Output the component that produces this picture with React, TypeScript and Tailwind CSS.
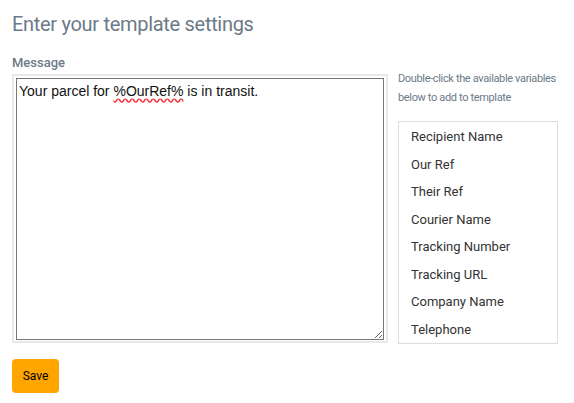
import { useState } from 'react';

const VARIABLES = [
  'Recipient Name',
  'Our Ref',
  'Their Ref',
  'Courier Name',
  'Tracking Number',
  'Tracking URL',
  'Company Name',
  'Telephone',
];

export default function App() {
  const [selected, setSelected] = useState<string | null>(null);

  return (
    <div className="min-h-[403px] bg-white px-3 pt-[10px] font-['Roboto',sans-serif]">
      {/* タイトル */}
      <h1 className="text-[20px] leading-[28px] text-[#6b7a88] tracking-[-0.3px]">
        Enter your template settings
      </h1>

      <div className="mt-[17px] flex gap-[10px]">
        {/* メッセージ */}
        <div className="w-[376px] shrink-0">
          <label className="block text-[13px] leading-[16px] font-medium text-[#6b7a88]">
            Message
          </label>
          <div className="mt-[3px] border-2 border-[#e8e8e8] p-[2px] h-[269px]">
            <div className="h-[262px] w-full resize overflow-auto border border-[#767676] px-[2px] pt-[2px] font-['Liberation_Sans',sans-serif] text-[14px] leading-[20px] text-[#111]">
              Your parcel for{' '}
              <span className="underline decoration-wavy decoration-red-500 underline-offset-2">%OurRef%</span>{' '}
              is in transit.
            </div>
          </div>
        </div>

        {/* 変数リスト */}
        <div className="w-[162px] shrink-0 pt-[14px]">
          <p className="w-[176px] text-[11px] leading-[19px] text-[#6b7a88] tracking-[-0.35px]">
            Double-click the available variables below to add to template
          </p>
          <ul className="mt-[14px] w-[160px] border border-[#dddddd] pt-[1px]">
            {VARIABLES.map((v) => (
              <li
                key={v}
                onDoubleClick={() => setSelected(v)}
                className={`px-3 text-[13px] leading-[27.5px] text-[#333] cursor-pointer ${
                  selected === v ? 'bg-gray-100' : ''
                }`}
              >
                {v}
              </li>
            ))}
          </ul>
        </div>
      </div>

      {/* 保存ボタン */}
      <button className="mt-[15px] h-[34px] w-[47px] rounded bg-[#ffa500] text-[12px] text-black">
        Save
      </button>
    </div>
  );
}
